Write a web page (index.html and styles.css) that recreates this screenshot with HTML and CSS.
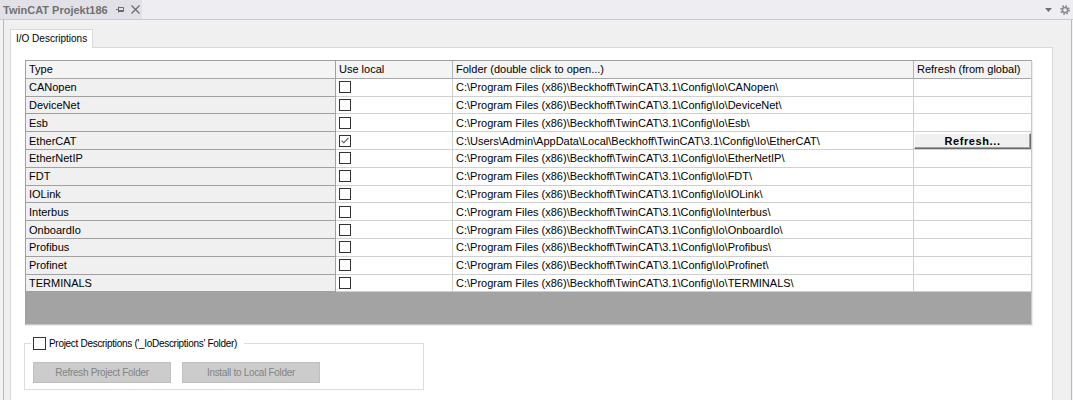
FILE: index.html
```html
<!DOCTYPE html>
<html>
<head>
<meta charset="utf-8">
<link rel="stylesheet" href="styles.css">
</head>
<body>
<div class="titlebar">
  <div class="doctab">
    <span class="doctitle">TwinCAT Projekt186</span>
    <svg class="pin" width="9" height="9" viewBox="0 0 9 9"><path d="M0 4.5H2.5M2.5 1.5V7.5M2.5 2.5H7.5V6.5H2.5M2.5 5.5H7.5" fill="none" stroke="#6d6d6d" stroke-width="1"/></svg>
    <svg class="close" width="9" height="9" viewBox="0 0 9 9"><path d="M0.5 0.5L8.5 8.5M8.5 0.5L0.5 8.5" stroke="#6d6d6d" stroke-width="1.3"/></svg>
  </div>
  <div class="spacer"></div>
  <div class="tools">
    <svg width="7" height="4" viewBox="0 0 7 4"><path d="M0 0H7L3.5 4Z" fill="#717171"/></svg>
    <svg width="10" height="10" viewBox="0 0 10 10"><circle cx="5" cy="5" r="3.7" fill="none" stroke="#8a8a8a" stroke-width="2.4" stroke-dasharray="1.45 1.46"/><circle cx="5" cy="5" r="2.6" fill="none" stroke="#8a8a8a" stroke-width="1.5"/></svg>
  </div>
</div>
<div class="panel">
  <div class="tabs"><div class="tab">I/O Descriptions</div></div>
  <div class="page">
    <div class="grid">
      <div class="row head">
        <div class="cell type">Type</div>
        <div class="cell">Use local</div>
        <div class="cell">Folder (double click to open...)</div>
        <div class="cell last">Refresh (from global)</div>
      </div>
      <div class="row"><div class="cell type">CANopen</div><div class="cell"><span class="cb"></span></div><div class="cell">C:\Program Files (x86)\Beckhoff\TwinCAT\3.1\Config\Io\CANopen\</div><div class="cell last"></div></div>
      <div class="row"><div class="cell type">DeviceNet</div><div class="cell"><span class="cb"></span></div><div class="cell">C:\Program Files (x86)\Beckhoff\TwinCAT\3.1\Config\Io\DeviceNet\</div><div class="cell last"></div></div>
      <div class="row"><div class="cell type">Esb</div><div class="cell"><span class="cb"></span></div><div class="cell">C:\Program Files (x86)\Beckhoff\TwinCAT\3.1\Config\Io\Esb\</div><div class="cell last"></div></div>
      <div class="row"><div class="cell type">EtherCAT</div><div class="cell"><span class="cb"><svg width="11" height="11" viewBox="0 0 11 11"><path d="M1.8 5.6L4.2 8L9.2 2.6" fill="none" stroke="#505050" stroke-width="1.2"/></svg></span></div><div class="cell">C:\Users\Admin\AppData\Local\Beckhoff\TwinCAT\3.1\Config\Io\EtherCAT\</div><div class="cell last btncell"><div class="refresh">Refresh...</div></div></div>
      <div class="row"><div class="cell type">EtherNetIP</div><div class="cell"><span class="cb"></span></div><div class="cell">C:\Program Files (x86)\Beckhoff\TwinCAT\3.1\Config\Io\EtherNetIP\</div><div class="cell last"></div></div>
      <div class="row"><div class="cell type">FDT</div><div class="cell"><span class="cb"></span></div><div class="cell">C:\Program Files (x86)\Beckhoff\TwinCAT\3.1\Config\Io\FDT\</div><div class="cell last"></div></div>
      <div class="row"><div class="cell type">IOLink</div><div class="cell"><span class="cb"></span></div><div class="cell">C:\Program Files (x86)\Beckhoff\TwinCAT\3.1\Config\Io\IOLink\</div><div class="cell last"></div></div>
      <div class="row"><div class="cell type">Interbus</div><div class="cell"><span class="cb"></span></div><div class="cell">C:\Program Files (x86)\Beckhoff\TwinCAT\3.1\Config\Io\Interbus\</div><div class="cell last"></div></div>
      <div class="row"><div class="cell type">OnboardIo</div><div class="cell"><span class="cb"></span></div><div class="cell">C:\Program Files (x86)\Beckhoff\TwinCAT\3.1\Config\Io\OnboardIo\</div><div class="cell last"></div></div>
      <div class="row"><div class="cell type">Profibus</div><div class="cell"><span class="cb"></span></div><div class="cell">C:\Program Files (x86)\Beckhoff\TwinCAT\3.1\Config\Io\Profibus\</div><div class="cell last"></div></div>
      <div class="row"><div class="cell type">Profinet</div><div class="cell"><span class="cb"></span></div><div class="cell">C:\Program Files (x86)\Beckhoff\TwinCAT\3.1\Config\Io\Profinet\</div><div class="cell last"></div></div>
      <div class="row"><div class="cell type">TERMINALS</div><div class="cell"><span class="cb"></span></div><div class="cell">C:\Program Files (x86)\Beckhoff\TwinCAT\3.1\Config\Io\TERMINALS\</div><div class="cell last"></div></div>
      <div class="empty"></div>
    </div>
    <fieldset class="group">
      <legend class="legend"><span class="cb big"></span><span>Project Descriptions ('_IoDescriptions' Folder)</span></legend>
      <div class="buttons">
        <button class="btn" disabled>Refresh Project Folder</button>
        <button class="btn" disabled>Install to Local Folder</button>
      </div>
    </fieldset>
  </div>
</div>
</body>
</html>
```

FILE: styles.css
```css
* { box-sizing: border-box; }
html, body { margin: 0; padding: 0; }
body {
  width: 1073px;
  height: 400px;
  overflow: hidden;
  background: #f3f3f5;
  font-family: "Liberation Sans", Arial, sans-serif;
  font-size: 11px;
  color: #000;
}
.titlebar {
  height: 20px;
  display: flex;
  background: #eeeef2;
  border-bottom: 1px solid #c9cbd3;
}
.doctab {
  width: 142px;
  height: 19px;
  background: #e1e1e7;
  display: flex;
  align-items: center;
  padding-left: 3px;
}
.doctitle {
  font-weight: bold;
  font-size: 11px;
  color: #717171;
}
.pin { margin-left: 8px; }
.close { margin-left: 6px; }
.spacer { flex: 1; }
.tools {
  display: flex;
  align-items: center;
  gap: 8px;
  height: 19px;
  padding-right: 3px;
}
.panel {
  margin-left: 3px;
  width: 1069px;
  height: 380px;
  background: #f0f0f0;
  border-left: 1px solid #b9b9b9;
  border-right: 1px solid #b9b9b9;
  padding: 9px 0 0 6px;
}
.tabs { display: flex; }
.tab {
  position: relative;
  z-index: 1;
  width: 83px;
  height: 19px;
  margin-bottom: -1px;
  background: #fff;
  border: 1px solid #d9d9d9;
  border-bottom: none;
  padding-left: 5px;
  font-size: 10px;
  line-height: 17px;
}
.page {
  width: 1043px;
  height: 360px;
  background: #fff;
  border: 1px solid #d9d9d9;
  padding: 12px 0 0 14px;
}
.grid {
  width: 1007px;
  border: 1px solid #a0a0a0;
  border-right-color: #c8c8c8;
  border-bottom-color: #c8c8c8;
  box-shadow: 1px 1px 0 #ebebeb;
}
.row {
  display: grid;
  grid-template-columns: 310px 117px 461px 117px;
  height: 17.8px;
}
.cell {
  display: flex;
  align-items: center;
  padding-left: 3px;
  white-space: nowrap;
  overflow: hidden;
  border-right: 1px solid #d0d0d0;
  border-bottom: 1px solid #d0d0d0;
  background: #fff;
}
.cell.last { border-right: none; }
.cell.type {
  background: #f0f0f0;
  border-right-color: #a0a0a0;
  border-bottom-color: #a0a0a0;
}
.head .cell {
  background: #f4f4f4;
  border-bottom-color: #a8a8a8;
  border-right-color: #b4b4b4;
}
.head .cell.type { border-right-color: #a0a0a0; }
.cb {
  display: inline-flex;
  align-items: center;
  justify-content: center;
  width: 12px;
  height: 12px;
  border: 1px solid #333;
  background: #fff;
}
.cb.big { width: 13px; height: 13px; }
.btncell { padding: 1px 0 0 0; align-items: stretch; }
.refresh {
  flex: 1;
  display: flex;
  align-items: center;
  justify-content: center;
  background: #f0f0f0;
  border: 1px solid;
  border-color: #fff #6a6a6a #6a6a6a #fff;
  box-shadow: inset -1px -1px 0 #a0a0a0;
  font-weight: bold;
  font-size: 11px;
  letter-spacing: 0.6px;
}
.empty {
  height: 32px;
  background: #a3a3a3;
}
.group {
  width: 400px;
  margin: 12px 0 0 -1px;
  padding: 12px 0 6px 8px;
  border: 1px solid #dcdcdc;
}
.legend {
  display: flex;
  align-items: center;
  gap: 3px;
  margin-left: -2px;
  padding: 0 7px 0 2px;
  font-size: 10px;
  letter-spacing: -0.3px;
}
.buttons { display: flex; gap: 11px; }
.btn {
  width: 138px;
  height: 21px;
  padding: 0;
  margin: 0;
  background: #cccccc;
  border: 1px solid #bfbfbf;
  color: #838383;
  font-family: "Liberation Sans", Arial, sans-serif;
  font-size: 10px;
  letter-spacing: -0.3px;
}
```
